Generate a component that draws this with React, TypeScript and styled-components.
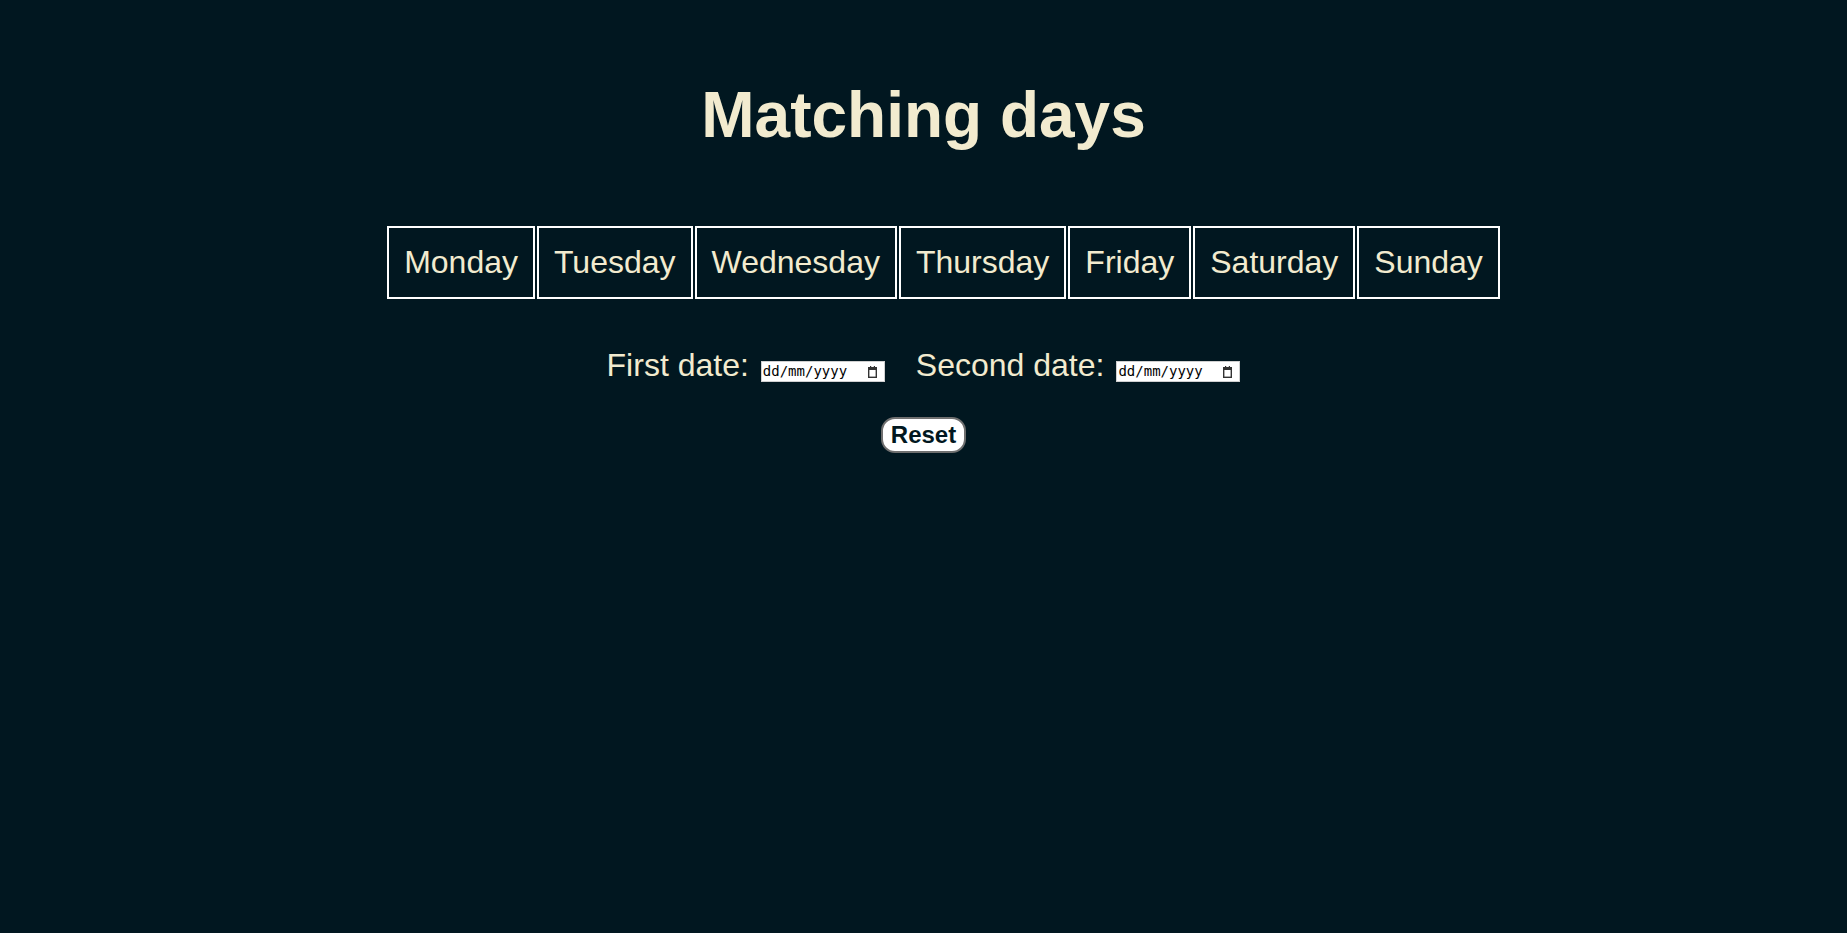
import React from "react";
import styled, { createGlobalStyle } from "styled-components";

const GlobalStyle = createGlobalStyle`
  html, body {
    margin: 0;
    padding: 0;
    background: #011720;
  }

  body {
    font-family: "Liberation Sans", Arial, sans-serif;
    color: #f2ebcf;
  }
`;

const Main = styled.main`
  min-height: 100vh;
  padding-top: 78px;
  display: flex;
  flex-direction: column;
  align-items: center;
  box-sizing: border-box;
`;

const Title = styled.h1`
  margin: 0;
  font-size: 64px;
  font-weight: bold;
`;

const DayList = styled.ul`
  margin: 74px 0 0;
  padding: 0 0 0 40px;
  list-style: none;
  display: flex;
  justify-content: center;
  gap: 2px;
`;

const Day = styled.li`
  border: 2px solid #ffffff;
  padding: 16px 15px;
  font-size: 32px;
`;

const DateRow = styled.div`
  margin-top: 48px;
  display: flex;
  align-items: baseline;
  justify-content: center;
  gap: 31px;
`;

const DateLabel = styled.label`
  display: inline-flex;
  align-items: baseline;
  gap: 12px;
  font-size: 32px;
`;

const DateField = styled.span`
  display: inline-flex;
  align-items: baseline;
  justify-content: space-between;
  box-sizing: border-box;
  width: 124px;
  height: 21px;
  padding: 0 7px 0 1px;
  background: #ffffff;
  border: 1px solid #d0d0d0;
`;

const DateText = styled.input`
  width: 94px;
  padding: 0;
  margin: 0;
  border: none;
  outline: none;
  background: transparent;
  font-family: "DejaVu Sans Mono", monospace;
  font-size: 14px;
  line-height: 19px;
  color: #000000;

  &::placeholder {
    color: #000000;
    opacity: 1;
  }
`;

const CalendarIcon = styled.svg`
  align-self: center;
  width: 9px;
  height: 12px;
  flex-shrink: 0;
`;

const ResetButton = styled.button`
  margin-top: 33px;
  padding: 2px 8px;
  font-family: "Liberation Sans", Arial, sans-serif;
  font-size: 24px;
  font-weight: bold;
  color: #011720;
  background: #ffffff;
  border: 2px solid #6f6f6f;
  border-radius: 14px;
  cursor: pointer;
`;

const days = ["Monday", "Tuesday", "Wednesday", "Thursday", "Friday", "Saturday", "Sunday"];

function DatePicker() {
  return (
    <DateField>
      <DateText type="text" placeholder="dd/mm/yyyy" />
      <CalendarIcon viewBox="0 0 9 12" aria-hidden="true">
        <rect x="2" y="0" width="1.2" height="2" fill="#333333" />
        <rect x="5.8" y="0" width="1.2" height="2" fill="#333333" />
        <rect x="0.7" y="1.7" width="7.6" height="9.6" fill="none" stroke="#333333" strokeWidth="1.4" />
        <rect x="0" y="1" width="9" height="3" fill="#333333" />
      </CalendarIcon>
    </DateField>
  );
}

export default function App() {
  return (
    <>
      <GlobalStyle />
      <Main>
        <Title>Matching days</Title>
        <DayList>
          {days.map((day) => (
            <Day key={day}>{day}</Day>
          ))}
        </DayList>
        <DateRow>
          <DateLabel>
            First date:
            <DatePicker />
          </DateLabel>
          <DateLabel>
            Second date:
            <DatePicker />
          </DateLabel>
        </DateRow>
        <ResetButton type="button">Reset</ResetButton>
      </Main>
    </>
  );
}
